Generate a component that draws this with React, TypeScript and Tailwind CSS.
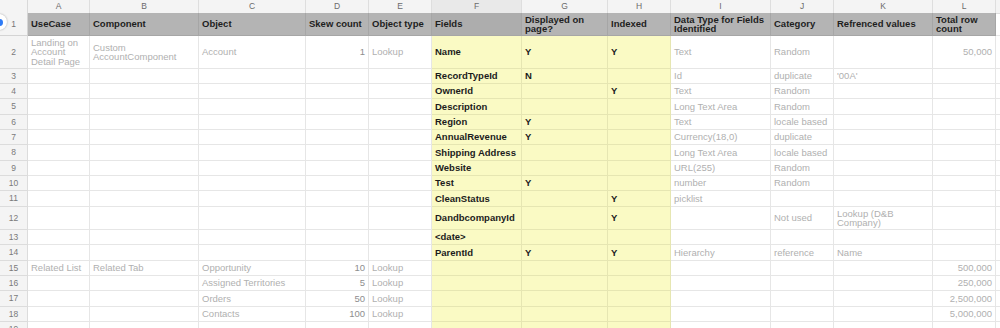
import { FC } from 'react';

type Row = { n: string; h: string; cells: (string | null)[] };

const letters = ['A', 'B', 'C', 'D', 'E', 'F', 'G', 'H', 'I', 'J', 'K', 'L'];

const rows: Row[] = [
  { n: '2', h: 'h-[33px]', cells: ['Landing on\nAccount\nDetail Page', 'Custom\nAccountComponent', 'Account', '1', 'Lookup', 'Name', 'Y', 'Y', 'Text', 'Random', null, '50,000'] },
  { n: '3', h: 'h-[15px]', cells: [null, null, null, null, null, 'RecordTypeId', 'N', null, 'Id', 'duplicate', "'00A'", null] },
  { n: '4', h: 'h-[15px]', cells: [null, null, null, null, null, 'OwnerId', null, 'Y', 'Text', 'Random', null, null] },
  { n: '5', h: 'h-[16px]', cells: [null, null, null, null, null, 'Description', null, null, 'Long Text Area', 'Random', null, null] },
  { n: '6', h: 'h-[15px]', cells: [null, null, null, null, null, 'Region', 'Y', null, 'Text', 'locale based', null, null] },
  { n: '7', h: 'h-[15px]', cells: [null, null, null, null, null, 'AnnualRevenue', 'Y', null, 'Currency(18,0)', 'duplicate', null, null] },
  { n: '8', h: 'h-[16px]', cells: [null, null, null, null, null, 'Shipping Address', null, null, 'Long Text Area', 'locale based', null, null] },
  { n: '9', h: 'h-[15px]', cells: [null, null, null, null, null, 'Website', null, null, 'URL(255)', 'Random', null, null] },
  { n: '10', h: 'h-[15px]', cells: [null, null, null, null, null, 'Test', 'Y', null, 'number', 'Random', null, null] },
  { n: '11', h: 'h-[16px]', cells: [null, null, null, null, null, 'CleanStatus', null, 'Y', 'picklist', null, null, null] },
  { n: '12', h: 'h-[23px]', cells: [null, null, null, null, null, 'DandbcompanyId', null, 'Y', null, 'Not used', 'Lookup (D&B\nCompany)', null] },
  { n: '13', h: 'h-[15px]', cells: [null, null, null, null, null, '<date>', null, null, null, null, null, null] },
  { n: '14', h: 'h-[16px]', cells: [null, null, null, null, null, 'ParentId', 'Y', 'Y', 'Hierarchy', 'reference', 'Name', null] },
  { n: '15', h: 'h-[15px]', cells: ['Related List', 'Related Tab', 'Opportunity', '10', 'Lookup', null, null, null, null, null, null, '500,000'] },
  { n: '16', h: 'h-[15px]', cells: [null, null, 'Assigned Territories', '5', 'Lookup', null, null, null, null, null, null, '250,000'] },
  { n: '17', h: 'h-[16px]', cells: [null, null, 'Orders', '50', 'Lookup', null, null, null, null, null, null, '2,500,000'] },
  { n: '18', h: 'h-[15px]', cells: [null, null, 'Contacts', '100', 'Lookup', null, null, null, null, null, null, '5,000,000'] },
  { n: '19', h: 'h-[15px]', cells: [null, null, null, null, null, null, null, null, null, null, null, null] },
];

const headers = ['UseCase', 'Component', 'Object', 'Skew count', 'Object type', 'Fields', 'Displayed on\npage?', 'Indexed', 'Data Type for Fields\nIdentified', 'Category', 'Refrenced values', 'Total row\ncount'];

const grid = 'grid grid-cols-[28px_62px_109px_107px_63px_63px_90px_86px_63px_100px_63px_99px_63px_1fr]';

const Lines: FC<{ text: string }> = ({ text }) => (
  <span className="whitespace-pre leading-[9.5px]">{text}</span>
);

const Cell: FC<{ value: string | null; col: number }> = ({ value, col }) => {
  const yellow = col >= 5 && col <= 7;
  const right = col === 3 || col === 11;
  const bold = yellow;
  return (
    <div
      className={`flex items-center border-b border-r px-[3px] overflow-hidden ${
        yellow ? 'bg-[#fafac4] border-[#e6e6b2]' : 'bg-white border-[#e6e6e6]'
      } ${right ? 'justify-end' : 'justify-start'} ${
        bold ? 'font-bold text-[#1c1c1c]' : col === 3 ? 'text-[#8e8e8e]' : 'text-[#b0b0b0]'
      }`}
    >
      {value && <Lines text={value} />}
    </div>
  );
};

const App: FC = () => {
  return (
    <div className="relative w-[1000px] h-[328px] overflow-hidden bg-white text-[9.5px]" style={{ fontFamily: '"Liberation Sans", Arial, sans-serif' }}>
      {/* column letters */}
      <div className={`${grid} h-[13px] bg-[#f4f4f4] text-[8.5px] text-[#6b6b6b]`}>
        <div className="border-b border-r border-[#d9d9d9]" />
        {letters.map((l) => (
          <div
            key={l}
            className={`flex items-center justify-center border-b border-r border-[#dedede] ${l === 'F' ? 'bg-[#e9e9e9]' : ''}`}
          >
            {l}
          </div>
        ))}
        <div className="border-b border-[#dedede]" />
      </div>

      {/* header row */}
      <div className={`${grid} h-[23px]`}>
        <div className="flex items-center justify-center bg-[#f4f4f4] border-b border-r border-[#d4d4d4] text-[8.5px] text-[#777]">1</div>
        {headers.map((h, i) => (
          <div
            key={h}
            className={`flex items-center px-[3px] border-b border-r border-[#a6a6a6] font-bold text-[#1e1e1e] ${i === 5 ? 'bg-[#adadad]' : 'bg-[#b4b4b4]'}`}
          >
            <Lines text={h} />
          </div>
        ))}
        <div className="border-b border-[#e6e6e6]" />
      </div>

      {rows.map((r) => (
        <div key={r.n} className={`${grid} ${r.h}`}>
          <div className="flex items-center justify-center bg-[#f4f4f4] border-b border-r border-[#dcdcdc] text-[8.5px] text-[#7a7a7a]">
            {r.n}
          </div>
          {r.cells.map((c, i) => (
            <Cell key={i} value={c} col={i} />
          ))}
          <div className="border-b border-[#e6e6e6]" />
        </div>
      ))}

      {/* selection handle */}
      <div className="absolute left-[-9px] top-[14px] w-4 h-4 rounded-full bg-white shadow-[0_0_2px_rgba(0,0,0,0.35)] flex items-center justify-center">
        <div className="w-[7px] h-[7px] rounded-full bg-[#2f7cf6]" />
      </div>
    </div>
  );
};

export default App;
